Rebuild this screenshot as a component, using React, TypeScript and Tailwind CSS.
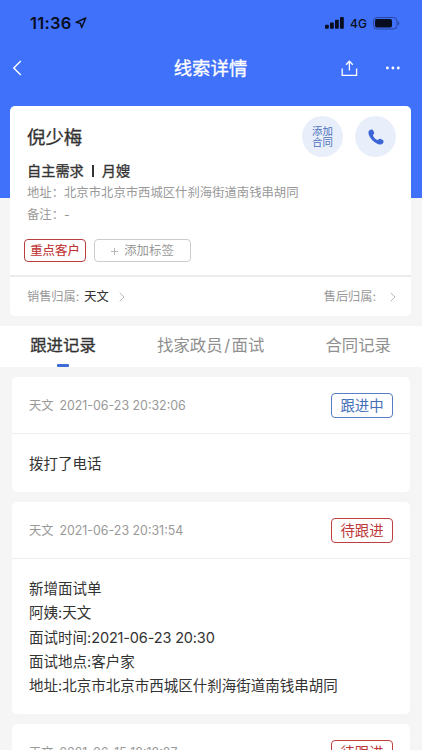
import type { ReactNode } from "react";

function Chevron() {
  return (
    <svg width="6" height="10" viewBox="0 0 6 10" fill="none" stroke="#b8b8b8" strokeWidth="1">
      <path d="M0.7 0.7 5 5 0.7 9.3" />
    </svg>
  );
}

function StatusBar() {
  return (
    <div className="flex h-[46px] items-center pl-[30px] pr-[22px] text-[#080d20]">
      <span className="w-[42px] text-[16.5px] font-semibold leading-5 tracking-[0.25px]">11:36</span>
      <svg className="ml-[3px]" width="12" height="12" viewBox="0 0 12 12" fill="none" stroke="currentColor" strokeWidth="1.4" strokeLinejoin="round">
        <path d="M10.8 1 1 5.4 5.4 6.2 6.6 10.6Z" />
      </svg>
      <svg className="ml-auto" width="19" height="12" viewBox="0 0 19 12" fill="currentColor">
        <rect x="0" y="7.7" width="3.8" height="4" rx="0.8" />
        <rect x="5" y="5.4" width="3.8" height="6.3" rx="0.8" />
        <rect x="10" y="2.8" width="3.8" height="8.9" rx="0.8" />
        <rect x="15" y="0" width="3.8" height="11.7" rx="0.8" />
      </svg>
      <span className="ml-[6px] w-[17px] pt-[2px] text-[12px] font-medium leading-4">4G</span>
      <svg className="ml-[6px]" width="27" height="13" viewBox="0 0 27 13" fill="none">
        <rect x="0.5" y="0.5" width="23.5" height="11.5" rx="3.4" stroke="#29469c" />
        <rect x="2" y="2" width="17" height="8.5" rx="1.8" fill="#080d20" />
        <path d="M25.2 4.3c1.6.7 1.6 3.3 0 4Z" fill="#29469c" />
      </svg>
    </div>
  );
}

function NavBar() {
  return (
    <div className="grid h-[44px] grid-cols-[1fr_auto_1fr] items-center pl-[12px] pr-[22px] text-white">
      <svg width="10" height="16" viewBox="0 0 10 16" fill="none" stroke="currentColor" strokeWidth="1.5">
        <path d="M8.8 1 1.8 8l7 7" />
      </svg>
      <h1 className="ml-[9px] text-[18.4px] leading-6 [-webkit-text-stroke:0.3px_currentColor]">线索详情</h1>
      <div className="flex items-center justify-end">
        <svg width="17" height="17" viewBox="0 0 17 17" fill="none" stroke="currentColor" strokeWidth="1.3">
          <path d="M1.2 8.5v6.8h14.4V8.5M8.4 10.6V1.4M5 4.7l3.4-3.5 3.4 3.5" />
        </svg>
        <svg className="ml-[27px]" width="15" height="4" viewBox="0 0 15 4" fill="currentColor">
          <circle cx="2.4" cy="2" r="1.4" />
          <circle cx="7.9" cy="2" r="1.4" />
          <circle cx="13.3" cy="2" r="1.4" />
        </svg>
      </div>
    </div>
  );
}

function CustomerCard() {
  return (
    <section className="ml-[10px] mr-[11px] -mt-[92px] h-[210px] rounded-[5px] bg-white text-[#333]">
      <div className="h-[169px] pl-[17px] pr-[15px]">
        <div className="flex h-[51px] items-end justify-between">
          <h2 className="mb-[8px] text-[18.4px] leading-6 [-webkit-text-stroke:0.3px_currentColor]">倪少梅</h2>
          <div className="flex gap-[12px]">
            <button className="flex h-[41px] w-[41px] flex-col items-center justify-center rounded-full bg-[#e9eefb] text-[10.4px] leading-[11px] text-[#4b72bd]">
              <span>添加</span>
              <span>合同</span>
            </button>
            <button className="flex h-[41px] w-[41px] items-center justify-center rounded-full bg-[#e9eefb]">
              <svg width="16" height="16" viewBox="0 0 16 16" fill="#3c66d6">
                <path d="M.7 2.300C1.300.8 3.100.1 4.200.5c.8.3 1.900 2.600 2 3.500.1 1-1.200 1.500-1.200 2.400 0 1.300 3.300 4.500 4.600 4.500.9 0 1.500-1.300 2.400-1.200 1 .1 3.100 1.200 3.500 2.100.4 1.100-.4 2.800-1.800 3.400C8.700 17.200-1.200 7.500.7 2.300Z" />
              </svg>
            </button>
          </div>
        </div>
        <p className="mt-[3px] flex h-[22px] items-center text-[14.2px] [-webkit-text-stroke:0.3px_currentColor]">
          自主需求<span className="ml-[8px] mr-[8px] h-[12px] w-[2px] bg-[#333]" />月嫂
        </p>
        <p className="text-[12.350px] leading-[21px] text-[#999]">地址：北京市北京市西城区什刹海街道南钱串胡同</p>
        <p className="mt-px text-[12.350px] leading-[22px] text-[#999]">备注：-</p>
        <div className="-ml-[3px] mt-[13px] flex gap-[8px] text-[12.4px]">
          <span className="flex h-[23px] w-[62px] items-center justify-center rounded-[4px] border border-[#b93e3e] pt-px text-[#c03232] [-webkit-text-stroke:0.15px_currentColor]">重点客户</span>
          <button className="flex h-[23px] w-[97px] items-center justify-center rounded-[4px] border border-[#ccc] pt-px text-[#999]">
            <svg className="mr-[6px]" width="7" height="7" viewBox="0 0 7 7" stroke="#b5b5b5">
              <path d="M3.500 0v7M0 3.500h7" />
            </svg>
            添加标签
          </button>
        </div>
      </div>
      <div className="flex h-[41px] items-center border-t-2 border-[#ebebeb] pl-[17px] pr-[15px] pt-px text-[12.2px] text-[#999]">
        <span>销售归属:</span>
        <span className="ml-[5px] mr-[10px] text-[#333] [-webkit-text-stroke:0.1px_currentColor]">天文</span>
        <Chevron />
        <span className="ml-auto mr-[14px]">售后归属:</span>
        <Chevron />
      </div>
    </section>
  );
}

function Tabs() {
  return (
    <nav className="mt-[10px] flex h-[41px] justify-between bg-white pl-[30px] pr-[31px] pt-[7px] text-[16.4px] leading-6 text-[#909090]">
      <div className="flex w-[66px] flex-col items-center text-[#333] [-webkit-text-stroke:0.3px_currentColor]">
        跟进记录
        <span className="mt-[7px] h-[3px] w-[12px] rounded-[1px] bg-[#3d6bd4]" />
      </div>
      <span>找家政员<span className="mx-[1.5px]">/</span>面试</span>
      <span>合同记录</span>
    </nav>
  );
}

function RecordCard({ time, status, active = false, children }: { time: string; status: string; active?: boolean; children?: ReactNode }) {
  return (
    <article className="mx-[12px] mt-[10px] rounded-[5px] bg-white">
      <header className="flex h-[57px] items-center border-b border-[#eee] pl-[17px] pr-[17px] pt-px text-[#999]">
        <span className="pt-px text-[12.2px]">天文</span>
        <time className="ml-[6px] pt-px text-[12.4px]">{time}</time>
        <span className={`ml-auto flex h-[25px] w-[62px] items-center justify-center rounded-[4px] border pt-px text-[14.4px] ${active ? "border-[#557cc4] text-[#456eb9]" : "border-[#bd4040] text-[#bd3838]"}`}>
          {status}
        </span>
      </header>
      <div className="px-[17px] text-[14.5px] leading-[24.200px] text-[#333]">{children}</div>
    </article>
  );
}

export default function App() {
  return (
    <main className="h-[750px] w-full overflow-hidden bg-[#f5f5f6] font-['Inter','Noto_Sans_CJK_SC',sans-serif]">
      <header className="h-[198px] bg-[#4071fb]">
        <StatusBar />
        <NavBar />
      </header>
      <CustomerCard />
      <Tabs />
      <RecordCard time="2021-06-23 20:32:06" status="跟进中" active>
        <p className="pb-[16px] pt-[18px]">拨打了电话</p>
      </RecordCard>
      <RecordCard time="2021-06-23 20:31:54" status="待跟进">
        <div className="h-[155px] pt-[18px]">
          <p>新增面试单</p>
          <p>阿姨:天文</p>
          <p>面试时间:<span className="tracking-[-0.15px]">2021-06-23 20:30</span></p>
          <p>面试地点:客户家</p>
          <p>地址:北京市北京市西城区什刹海街道南钱串胡同</p>
        </div>
      </RecordCard>
      <RecordCard time="2021-06-15 18:18:27" status="待跟进" />
    </main>
  );
}
